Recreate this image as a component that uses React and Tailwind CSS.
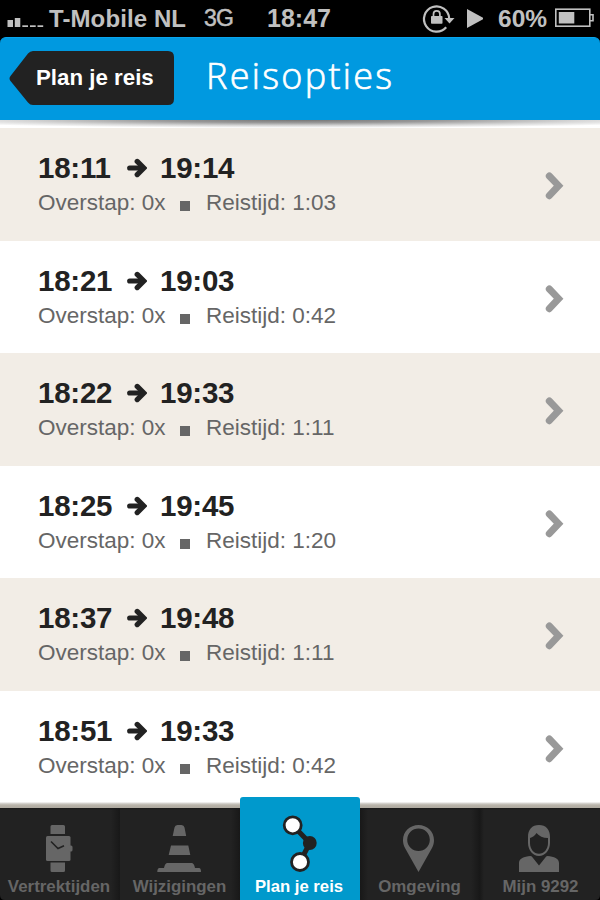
import React from 'react';

const trips = [
  ['18:11', '19:14', '1:03'],
  ['18:21', '19:03', '0:42'],
  ['18:22', '19:33', '1:11'],
  ['18:25', '19:45', '1:20'],
  ['18:37', '19:48', '1:11'],
  ['18:51', '19:33', '0:42'],
];

function StatusBar() {
  return (
    <div className="flex h-[37px] shrink-0 items-center bg-black text-[#c0c0c0]">
      <svg className="ml-[7px] h-[37px] w-[37px]" viewBox="7 0 37 37" fill="#c0c0c0">
        <rect x="7.5" y="20" width="5.5" height="7" />
        <rect x="14.8" y="18" width="5.5" height="9" />
        <rect x="22.3" y="25.3" width="5.7" height="1.7" />
        <rect x="30" y="25.3" width="5.7" height="1.7" />
        <rect x="37.5" y="25.3" width="5.7" height="1.7" />
      </svg>
      <span className="ml-[5px] w-[155px] text-[24px] leading-[37px] font-bold tracking-[0.1px] whitespace-nowrap">T-Mobile NL</span>
      <span className="w-[63px] text-[23px] leading-[37px] tracking-[-0.8px] [-webkit-text-stroke:0.5px_#c0c0c0]">3G</span>
      <span className="w-[154px] text-[25px] leading-[37px] font-bold">18:47</span>
      <svg className="h-[37px] w-[62px]" viewBox="421 0 62 37" fill="none">
        <path d="M446.2 27.2A12.6 12.6 0 1 1 449.2 18.5" stroke="#c0c0c0" strokeWidth="2.2" />
        <path d="M444.5 18H454.5L449.5 23.5Z" fill="#c0c0c0" />
        <rect x="431" y="16" width="11.5" height="7.8" rx=".8" fill="#c0c0c0" />
        <path d="M433.5 16.5V14a3.2 3.2 0 0 1 6.4 0v2.5" stroke="#c0c0c0" strokeWidth="1.7" />
        <path d="M467 9V28L484.5 18.5Z" fill="#c0c0c0" />
      </svg>
      <span className="ml-[15px] w-[57px] text-[24.5px] leading-[37px] font-bold">60%</span>
      <svg className="h-[37px] w-[40px]" viewBox="555 0 40 37" fill="none">
        <rect x="555.8" y="9.2" width="34" height="17" stroke="#c0c0c0" strokeWidth="1.6" />
        <rect x="558.8" y="12" width="15.5" height="11.5" fill="#c0c0c0" />
        <path d="M590 14.8h3v6h-3" stroke="#c0c0c0" strokeWidth="1.6" />
      </svg>
    </div>
  );
}

function Header() {
  return (
    <div className="h-[83px] shrink-0 bg-black">
      <header className="flex h-[83px] items-start rounded-t-[6px] border-t border-[#08a5ed] bg-[#0099e0] pt-[13px] pl-[9px]">
        <div className="relative h-[55px] w-[166px]">
          <svg className="absolute inset-0 h-[55px] w-[166px]" viewBox="9 51 166 55">
            <path d="M33 51H168Q174 51 174 57V99Q174 105 168 105H33Q30 105 28 102.5L10.5 81Q8.5 78.5 10.500 76L28 53.5Q30 51 33 51Z" fill="#222" />
          </svg>
          <span className="relative block pl-[27px] text-[22.3px] leading-[53px] font-bold whitespace-nowrap text-white">Plan je reis</span>
        </div>
        <h1 className="ml-[31px] font-['Open_Sans',sans-serif] text-[36px] leading-[49px] font-light tracking-[2.3px] whitespace-nowrap text-white [-webkit-text-stroke:0.7px_white]">Reisopties</h1>
      </header>
    </div>
  );
}

function TripRow({ trip, shaded }) {
  return (
    <div className={`flex h-[112.5px] shrink-0 pl-[38px] ${shaded ? 'bg-[#f2ede6]' : 'bg-white'}`}>
      <div className="w-[507px] pt-[24px]">
        <div className="flex items-center text-[29.5px] leading-[32px] font-bold tracking-[-0.25px] text-[#222]">
          <span className="w-[89px]">{trip[0]}</span>
          <svg className="mr-[13px] h-[32px] w-[20px]" viewBox="0 0 20 32" fill="none" stroke="#222">
            <path d="M2.700 16H15" strokeWidth="5.200" strokeLinecap="round" />
            <path d="M10.200 9.400L16.800 16L10.200 22.600" strokeWidth="5.200" strokeLinecap="round" />
          </svg>
          <span>{trip[1]}</span>
        </div>
        <div className="mt-[3px] flex items-start text-[22.5px] leading-[32px] text-[#666]">
          <span className="w-[142px] whitespace-nowrap">Overstap: 0x</span>
          <i className="mt-[14px] mr-[16px] h-[10px] w-[10px] bg-[#666]" />
          <span className="whitespace-nowrap">Reistijd: {trip[2]}</span>
        </div>
      </div>
      <svg className="mt-[43px] h-[30px] w-[20px]" viewBox="0 0 20 30" fill="none">
        <path d="M4.300 5L13.600 14.700L4.300 24.700" stroke="#999" strokeWidth="7" strokeLinecap="round" />
      </svg>
    </div>
  );
}

const icons = {
  watch: (
    <g fill="#666">
      <path d="M52 825h11.500q1.500 0 1.500 1.500V834H50.500v-7.500q0-1.500 1.500-1.500ZM50.500 862.500H65v8q0 1.500-1.500 1.500H52q-1.500 0-1.500-1.500Z" />
      <rect x="46" y="836" width="24.500" height="25" rx="1.500" />
      <rect x="68" y="845.500" width="4.500" height="6" rx="1.500" />
      <path d="M51 841.500L58 848.500L64 845.800" stroke="#222" strokeWidth="1.600" fill="none" />
    </g>
  ),
  cone: (
    <g fill="#666" transform="translate(-120 0)">
      <path d="M292.700 836L294.500 827.500Q295 825 297.500 825H301.500Q304 825 304.500 827.500L306.200 836ZM291 845.500H308.300L310.300 855H288.700ZM287.500 863H311.500Q314 863 315 868H319Q321 868 321 872H277.300Q277.300 868 279.500 868H284Q285 863 287.500 863Z" />
    </g>
  ),
  route: (
    <g stroke="#222">
      <path d="M292.700 825.300L309.800 843L300 862" strokeWidth="5" fill="none" />
      <circle cx="309.800" cy="843" r="6.900" fill="#222" stroke="none" />
      <circle cx="292.700" cy="825.300" r="8.500" fill="white" strokeWidth="2.800" />
      <circle cx="300" cy="862" r="8.500" fill="white" strokeWidth="2.800" />
    </g>
  ),
  pin: (
    <path fill="#666" fillRule="evenodd" d="M418.500 825C427 825 434 831.500 434 840C434 843 433.500 845 432 848L418.500 872L405 848C403.500 845 403 843 403 840C403 831.500 410 825 418.500 825ZM418.500 828.500A11.300 11.300 0 1 0 418.500 851.100A11.300 11.300 0 1 0 418.500 828.500Z" />
  ),
  person: (
    <g fill="#666">
      <path fillRule="evenodd" d="M539 825C546 825 550 829.500 550 837V843C550 850 545 856 539 856C533 856 528 850 528 843V837C528 829.500 532 825 539 825ZM530 838V843C530 849 534 853.800 539 853.800C544 853.800 548 849 548 843V838C543 838 539 836 536.500 833C535 835.500 532.500 837.500 530 838Z" />
      <path d="M530.500 856Q532 856 533 858L539 865.500L545 858Q546 856 547.500 856C554 856.500 559 858.500 559 863V872H519V863C519 858.500 524 856.500 530.500 856Z" />
    </g>
  ),
};

const tabs = [
  ['Vertrektijden', 'watch', '0 797 120 80', 'text-[16.9px] pr-[2px]'],
  ['Wijzigingen', 'cone', '120 797 120 80', 'text-[16.9px] pr-[1px]'],
  ['Plan je reis', 'route', '240 797 120 80', 'text-[16.7px] pr-[2px]'],
  ['Omgeving', 'pin', '360 797 120 80', 'text-[16.9px] pr-[1px]'],
  ['Mijn 9292', 'person', '480 797 120 80', 'text-[16.9px] pl-[1px]'],
];

function TabBar() {
  return (
    <nav className="absolute inset-x-0 bottom-0 flex h-[103px]">
      {tabs.map(([label, icon, box, style], i) => {
        const active = icon === 'route';
        const ground = active
          ? 'rounded-t-[3px] bg-[#0099cc] text-white'
          : 'bg-[linear-gradient(to_bottom,transparent_5px,#dcdad6_6px,#b9b4aa_8px,#b0aba1_10.5px,#191919_11px,#222_13px)] text-[#666]';
        return (
          <div key={label} className={`relative h-[103px] w-[120px] ${ground}`}>
            {!active && (
              <div className={`absolute inset-x-0 top-[11px] bottom-0 ${i < 4 ? 'bg-[linear-gradient(to_left,#181818,transparent_9px)]' : ''}`} />
            )}
            {i === 3 && <div className="absolute top-[11px] bottom-0 left-0 w-[8px] bg-linear-to-r from-[#181818] to-transparent" />}
            {i === 4 && <div className="absolute top-[11px] bottom-0 left-0 w-[4px] bg-linear-to-r from-[#191919] to-transparent" />}
            <svg className="relative h-[80px] w-[120px]" viewBox={box}>{icons[icon]}</svg>
            <div className={`relative text-center leading-[20px] font-bold whitespace-nowrap ${style}`}>{label}</div>
          </div>
        );
      })}
      <svg className="absolute bottom-0 left-0 h-[5px] w-[5px]" viewBox="0 0 5 5"><path d="M0 0Q0 5 5 5H0Z" /></svg>
      <svg className="absolute right-0 bottom-0 h-[5px] w-[5px]" viewBox="0 0 5 5"><path d="M5 0Q5 5 0 5H5Z" /></svg>
    </nav>
  );
}

export default function App() {
  return (
    <div className="relative flex h-[900px] w-[600px] flex-col overflow-hidden bg-white font-['Liberation_Sans',sans-serif]">
      <StatusBar />
      <Header />
      <div className="h-[8px] shrink-0 overflow-hidden bg-white">
        <div className="h-[8px] bg-[radial-gradient(ellipse_400px_8px_at_50%_0,#777_0%,#999_35%,#d6d6d6_70%,#fff_100%)]" />
      </div>
      <main className="flex flex-col">
        {trips.map((trip, i) => (
          <TripRow key={trip[0]} trip={trip} shaded={i % 2 === 0} />
        ))}
      </main>
      <TabBar />
    </div>
  );
}
